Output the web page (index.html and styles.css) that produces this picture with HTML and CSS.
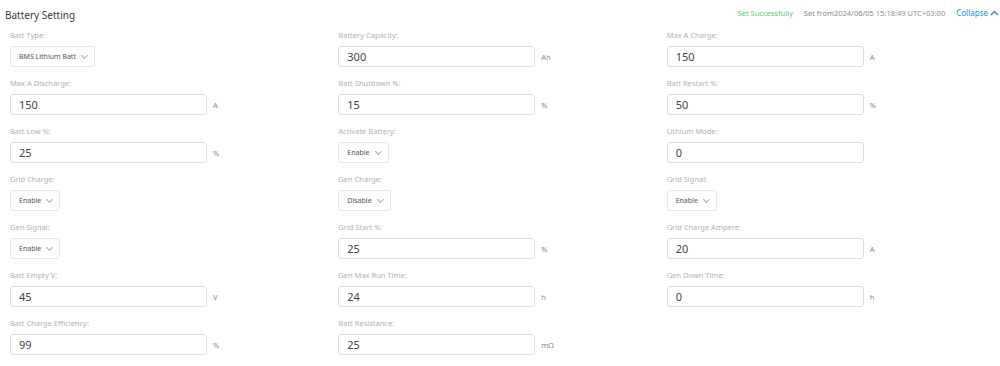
FILE: index.html
```html
<!DOCTYPE html>
<html lang="en">
<head>
  <meta charset="UTF-8" />
  <meta name="viewport" content="width=device-width, initial-scale=1.0"/>
  <title>Battery Setting</title>
  <link rel="stylesheet" href="styles.css">
</head>
<body>
  <div class="header">
    <div class="title">Battery Setting</div>
    <div class="status">
      <span class="ok">Set Successfully</span>
      <span class="from">Set from2024/06/05 15:18:49 UTC+03:00</span>
      <span class="collapse">Collapse
        <svg width="9" height="6" viewBox="0 0 9 6"><path d="M1 5 L4.5 1.5 L8 5" fill="none" stroke="#1a8cff" stroke-width="1.4"/></svg>
      </span>
    </div>
  </div>

  <div class="form">
    <div class="field">
      <label>Batt Type:</label>
      <div class="ctl"><div class="select">BMS Lithium Batt <span class="arrow"></span></div></div>
    </div>
    <div class="field">
      <label>Battery Capacity:</label>
      <div class="ctl"><input type="text" value="300"><span class="unit">Ah</span></div>
    </div>
    <div class="field">
      <label>Max A Charge:</label>
      <div class="ctl"><input type="text" value="150"><span class="unit">A</span></div>
    </div>

    <div class="field">
      <label>Max A Discharge:</label>
      <div class="ctl"><input type="text" value="150"><span class="unit">A</span></div>
    </div>
    <div class="field">
      <label>Batt Shutdown %:</label>
      <div class="ctl"><input type="text" value="15"><span class="unit">%</span></div>
    </div>
    <div class="field">
      <label>Batt Restart %:</label>
      <div class="ctl"><input type="text" value="50"><span class="unit">%</span></div>
    </div>

    <div class="field">
      <label>Batt Low %:</label>
      <div class="ctl"><input type="text" value="25"><span class="unit">%</span></div>
    </div>
    <div class="field">
      <label>Activate Battery:</label>
      <div class="ctl"><div class="select">Enable <span class="arrow"></span></div></div>
    </div>
    <div class="field">
      <label>Lithium Mode:</label>
      <div class="ctl"><input type="text" value="0"></div>
    </div>

    <div class="field">
      <label>Grid Charge:</label>
      <div class="ctl"><div class="select">Enable <span class="arrow"></span></div></div>
    </div>
    <div class="field">
      <label>Gen Charge:</label>
      <div class="ctl"><div class="select">Disable <span class="arrow"></span></div></div>
    </div>
    <div class="field">
      <label>Grid Signal:</label>
      <div class="ctl"><div class="select">Enable <span class="arrow"></span></div></div>
    </div>

    <div class="field">
      <label>Gen Signal:</label>
      <div class="ctl"><div class="select">Enable <span class="arrow"></span></div></div>
    </div>
    <div class="field">
      <label>Grid Start %:</label>
      <div class="ctl"><input type="text" value="25"><span class="unit">%</span></div>
    </div>
    <div class="field">
      <label>Grid Charge Ampere:</label>
      <div class="ctl"><input type="text" value="20"><span class="unit">A</span></div>
    </div>

    <div class="field">
      <label>Batt Empty V:</label>
      <div class="ctl"><input type="text" value="45"><span class="unit">V</span></div>
    </div>
    <div class="field">
      <label>Gen Max Run Time:</label>
      <div class="ctl"><input type="text" value="24"><span class="unit">h</span></div>
    </div>
    <div class="field">
      <label>Gen Down Time:</label>
      <div class="ctl"><input type="text" value="0"><span class="unit">h</span></div>
    </div>

    <div class="field">
      <label>Batt Charge Efficiency:</label>
      <div class="ctl"><input type="text" value="99"><span class="unit">%</span></div>
    </div>
    <div class="field">
      <label>Batt Resistance:</label>
      <div class="ctl"><input type="text" value="25"><span class="unit">mΩ</span></div>
    </div>
  </div>
</body>
</html>
```
FILE: styles.css
```css
body {
  margin: 0;
  font-family: 'Noto Sans', 'Open Sans', sans-serif;
  background: #fff;
  color: #333;
}
.header {
  display: flex;
  justify-content: space-between;
  align-items: center;
  height: 28px;
  padding: 0 1px 0 5px;
}
.title {
  font-size: 10px;
  color: #3a3a3a;
  margin-top: 1px;
}
.status {
  display: flex;
  align-items: center;
  gap: 11px;
  font-size: 7.5px;
  margin-top: -3px;
}
.ok { color: #5cc878; }
.from { color: #8c8c8c; }
.collapse {
  color: #1a8cff;
  display: flex;
  align-items: center;
  gap: 2px;
  font-size: 8px;
}
.form {
  display: grid;
  grid-template-columns: repeat(3, 1fr);
  row-gap: 9px;
  padding: 0 5px 0 10px;
}
.field label {
  display: block;
  font-size: 7.5px;
  line-height: 14px;
  color: #b0b0b0;
  margin-bottom: 4px;
}
.ctl {
  display: flex;
  align-items: center;
  height: 21px;
}
.ctl input {
  box-sizing: border-box;
  width: 197px;
  height: 21px;
  border: 1px solid #dedede;
  border-radius: 3px;
  padding: 0 8px;
  font-family: inherit;
  font-size: 11px;
  color: #444;
  outline: none;
}
.unit {
  margin-left: 6px;
  font-size: 7.5px;
  color: #888;
}
.select {
  box-sizing: border-box;
  height: 21px;
  display: flex;
  align-items: center;
  gap: 4px;
  padding: 0 7px 0 8px;
  border: 1px solid #e6e6e6;
  border-radius: 3px;
  font-size: 7px;
  color: #555;
}
.arrow {
  width: 4px;
  height: 4px;
  border-right: 1px solid #aaa;
  border-bottom: 1px solid #aaa;
  transform: rotate(45deg);
  margin: 0 0 3px 2px;
}
```
